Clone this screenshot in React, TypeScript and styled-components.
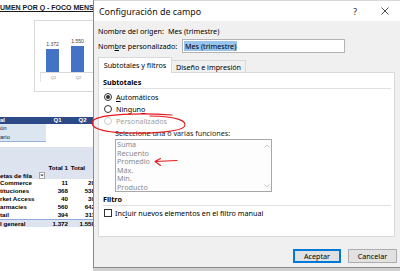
import React from 'react';
import styled, { createGlobalStyle } from 'styled-components';

const GlobalStyle = createGlobalStyle`
  html, body { margin: 0; padding: 0; background: #ffffff; }
  body { width: 400px; height: 271px; overflow: hidden; }
`;

const Screen = styled.div`
  position: relative;
  width: 400px;
  height: 271px;
  display: flex;
  overflow: hidden;
  background: #ffffff;
`;

/* ---------- spreadsheet (left) ---------- */
const Sheet = styled.div`
  width: 93px;
  flex: none;
  display: flex;
  flex-direction: column;
  overflow: hidden;
  font-family: "Liberation Sans", Arial, sans-serif;
  color: #000;
`;

const SheetTitle = styled.div`
  height: 16px;
  line-height: 16px;
  white-space: nowrap;
  font-size: 7px;
  font-weight: bold;
  text-decoration: underline;
  color: #1a1a1a;
`;

const ChartBox = styled.div`
  margin: 4px 0 0 34px;
  width: 70px;
  height: 72px;
  flex: none;
  box-sizing: border-box;
  border: 1px solid #d9d9d9;
  display: flex;
  flex-direction: column;
`;

const Plot = styled.div`
  height: 51px;
  padding-left: 5px;
  display: flex;
  align-items: flex-end;
`;

const BarCol = styled.div`
  width: 25px;
  display: flex;
  flex-direction: column;
  align-items: center;
  justify-content: flex-end;
`;

const BarLabel = styled.div`
  font-size: 5px;
  color: #404040;
  margin-bottom: 2px;
`;

const Bar = styled.div<{ $h: number }>`
  width: 13px;
  height: ${(p) => p.$h}px;
  background: #4472c4;
`;

const Axis = styled.div`
  margin-left: 5px;
  height: 10px;
  border-top: 1px solid #d9d9d9;
  border-left: 1px solid #e3e3e3;
  box-sizing: border-box;
  display: flex;
`;

const AxisLabel = styled.div`
  width: 25px;
  text-align: center;
  font-size: 4px;
  line-height: 9px;
  color: #808080;
`;

const PivotGrid = styled.div<{ $top: number }>`
  margin-top: ${(p) => p.$top}px;
  display: grid;
  grid-template-columns: 46px 23px 27px;
  white-space: nowrap;
`;

const HeadCell = styled.div<{ $align?: string }>`
  height: 7px;
  line-height: 7px;
  background: #2c4a86;
  color: #ffffff;
  font-size: 6px;
  font-weight: bold;
  text-align: ${(p) => p.$align || 'left'};
`;

const LightCell = styled.div<{ $last?: boolean }>`
  height: 9px;
  line-height: 9px;
  font-size: 6px;
  background: #dce6f1;
  color: #222;
  border-bottom: ${(p) => (p.$last ? '1px solid #95b3d7' : 'none')};
  box-sizing: border-box;
`;

const EmptyCell = styled.div``;

const Pivot2 = styled.div`
  margin-top: 5px;
  height: 80px;
  background: #dde3ef;
  padding-top: 17px;
  box-sizing: border-box;
  display: grid;
  grid-template-columns: 46px 23px 27px;
  grid-auto-rows: min-content;
  white-space: nowrap;
  font-weight: bold;
  font-size: 6.2px;
`;

const PCell = styled.div<{ $align?: string; $h?: number; $bg?: string; $top?: boolean }>`
  height: ${(p) => p.$h || 8}px;
  line-height: ${(p) => p.$h || 8}px;
  text-align: ${(p) => p.$align || 'left'};
  background: ${(p) => p.$bg || 'transparent'};
  border-top: ${(p) => (p.$top ? '1px solid #8ea9db' : 'none')};
  box-sizing: border-box;
  padding-right: 1px;
  overflow: hidden;
  display: flex;
  align-items: center;
  justify-content: ${(p) => (p.$align === 'right' ? 'flex-end' : 'flex-start')};
`;

const FilterBtn = styled.span`
  margin-left: auto;
  width: 6px;
  height: 7px;
  box-sizing: border-box;
  border: 1px solid #a6a6a6;
  background: #fff;
  display: flex;
  align-items: center;
  justify-content: center;
`;

/* ---------- dialog (right) ---------- */
const RightCol = styled.div`
  flex: 1;
  display: flex;
  flex-direction: column;
`;

const Dialog = styled.div`
  height: 268px;
  flex: none;
  box-sizing: border-box;
  border-left: 1px solid #8a8a8a;
  border-bottom: 1px solid #8a8a8a;
  display: flex;
  flex-direction: column;
  font-family: "Noto Sans", "Segoe UI", sans-serif;
  font-size: 7.2px;
  color: #000;
`;

const BottomStrip = styled.div`
  flex: 1;
  background: #d0d0d0;
`;

const TitleBar = styled.div`
  height: 21px;
  flex: none;
  background: #ffffff;
  border-top: 1px solid #d8d8d8;
  box-sizing: border-box;
  display: flex;
  align-items: center;
  padding-left: 5px;
`;

const TitleText = styled.div`
  flex: 1;
  font-size: 8.9px;
  color: #111;
`;

const TitleBtn = styled.div<{ $w: number }>`
  width: ${(p) => p.$w}px;
  display: flex;
  justify-content: center;
  align-items: center;
  font-size: 8.5px;
  color: #222;
`;

const Body = styled.div`
  flex: 1;
  background: #f0f0f0;
  padding: 0 3px 0 4px;
  display: flex;
  flex-direction: column;
`;

const FieldRow = styled.div<{ $mt: number }>`
  margin-top: ${(p) => p.$mt}px;
  height: 14px;
  display: flex;
  align-items: center;
  white-space: nowrap;
`;

const FieldLabel = styled.div<{ $w: number }>`
  width: ${(p) => p.$w}px;
  flex: none;
`;

const TextInput = styled.div`
  width: 163px;
  height: 14px;
  box-sizing: border-box;
  border: 1px solid #b4b4b4;
  background: #ffffff;
  display: flex;
  align-items: center;
  padding-left: 1px;
`;

const Selected = styled.span`
  background: #99c4ec;
  color: #000;
  padding: 0 1px;
  line-height: 10px;
`;

const TabStrip = styled.div`
  margin-top: 4px;
  height: 15px;
  flex: none;
  display: flex;
  align-items: flex-end;
`;

const Tab = styled.div<{ $active?: boolean }>`
  position: relative;
  z-index: ${(p) => (p.$active ? 1 : 0)};
  width: 74px;
  height: ${(p) => (p.$active ? 16 : 12)}px;
  margin-bottom: ${(p) => (p.$active ? -1 : 0)}px;
  box-sizing: border-box;
  border: 1px solid #d9d9d9;
  border-bottom: none;
  border-left: ${(p) => (p.$active ? '1px solid #d9d9d9' : 'none')};
  background: ${(p) => (p.$active ? '#ffffff' : '#f0f0f0')};
  padding-bottom: ${(p) => (p.$active ? 1 : 0)}px;
  display: flex;
  align-items: center;
  justify-content: center;
  white-space: nowrap;
`;

const Panel = styled.div`
  width: 297px;
  height: 165px;
  flex: none;
  box-sizing: border-box;
  border: 1px solid #d9d9d9;
  background: #ffffff;
  padding: 0 3px 0 4px;
  display: flex;
  flex-direction: column;
`;

const GroupTitle = styled.div<{ $mt: number }>`
  margin-top: ${(p) => p.$mt}px;
  height: 10px;
  line-height: 10px;
  font-weight: bold;
`;

const Separator = styled.div<{ $mb?: number }>`
  margin-top: 1px;
  margin-bottom: ${(p) => p.$mb || 0}px;
  height: 1px;
  background: #e0e0e0;
`;

const OptionRow = styled.div<{ $disabled?: boolean }>`
  height: 12px;
  display: flex;
  align-items: center;
  gap: 4px;
  color: ${(p) => (p.$disabled ? '#a0a0a0' : '#000')};
`;

const Radio = styled.span<{ $checked?: boolean; $disabled?: boolean }>`
  margin-left: 1px;
  width: 8px;
  height: 8px;
  box-sizing: border-box;
  border-radius: 50%;
  border: 1px solid ${(p) => (p.$disabled ? '#cccccc' : '#333333')};
  background: #fff;
  display: flex;
  align-items: center;
  justify-content: center;
  &::after {
    content: '';
    display: ${(p) => (p.$checked ? 'block' : 'none')};
    width: 4px;
    height: 4px;
    border-radius: 50%;
    background: #333;
  }
`;

const Caption = styled.div`
  height: 12px;
  line-height: 12px;
  padding-left: 12px;
  color: #222;
`;

const ListBox = styled.div`
  margin-left: 12px;
  width: 157px;
  height: 53px;
  flex: none;
  box-sizing: border-box;
  border: 1px solid #a8a8a8;
  background: #fdfdfd;
  display: flex;
`;

const ListItems = styled.div`
  flex: 1;
  padding: 0 0 0 1px;
  display: flex;
  flex-direction: column;
`;

const ListItem = styled.div`
  height: 8.6px;
  line-height: 8.6px;
  color: #8a8a8a;
`;

const ScrollTrack = styled.div`
  width: 9px;
  display: flex;
  flex-direction: column;
  justify-content: space-between;
  align-items: center;
  padding: 4px 0 3px;
  box-sizing: border-box;
`;

const CheckRow = styled.div`
  margin-top: 2px;
  height: 10px;
  display: flex;
  align-items: center;
  gap: 3px;
`;

const CheckBox = styled.span`
  margin-left: 1px;
  width: 8px;
  height: 8px;
  box-sizing: border-box;
  border: 1px solid #333;
  background: #fff;
`;

const ButtonRow = styled.div`
  margin-top: 12px;
  display: flex;
  justify-content: flex-end;
  gap: 7px;
`;

const Button = styled.div<{ $primary?: boolean; $w: number }>`
  width: ${(p) => p.$w}px;
  height: 14px;
  box-sizing: border-box;
  border: 1px solid ${(p) => (p.$primary ? '#0078d7' : '#adadad')};
  box-shadow: ${(p) => (p.$primary ? 'inset 0 0 0 1px #0078d7' : 'none')};
  background: #e1e1e1;
  display: flex;
  align-items: center;
  justify-content: center;
`;

const Overlay = styled.svg`
  position: absolute;
  left: 0;
  top: 0;
  pointer-events: none;
`;

const Arrow = ({ up }: { up?: boolean }) => (
  <svg width="6" height="4" viewBox="0 0 6 4">
    <path d={up ? 'M0.5 3.5 L3 1 L5.5 3.5' : 'M0.5 0.5 L3 3 L5.5 0.5'} fill="none" stroke="#b8b8b8" strokeWidth="0.8" />
  </svg>
);

const rows = [
  ['Commerce', '11', '20'],
  ['tituciones', '368', '538'],
  ['rket Access', '40', '39'],
  ['armacies', '560', '642'],
  ['tail', '394', '311'],
];

export default function App() {
  return (
    <>
      <GlobalStyle />
      <Screen>
        <Sheet>
          <SheetTitle>UMEN POR Q - FOCO MENS</SheetTitle>
          <ChartBox>
            <Plot>
              <BarCol>
                <BarLabel>1.372</BarLabel>
                <Bar $h={23} />
              </BarCol>
              <BarCol>
                <BarLabel>1.550</BarLabel>
                <Bar $h={26} />
              </BarCol>
            </Plot>
            <Axis>
              <AxisLabel>Q1</AxisLabel>
              <AxisLabel>Q2</AxisLabel>
            </Axis>
          </ChartBox>
          <PivotGrid $top={25}>
            <HeadCell>al</HeadCell>
            <HeadCell $align="center">Q1</HeadCell>
            <HeadCell $align="center">Q2</HeadCell>
            <LightCell>ón</LightCell>
            <EmptyCell />
            <EmptyCell />
            <LightCell $last>ario</LightCell>
            <EmptyCell />
            <EmptyCell />
          </PivotGrid>
          <Pivot2>
            <PCell />
            <PCell $align="right">Total 1</PCell>
            <PCell>&nbsp;Total</PCell>
            <PCell $h={7}>
              etas de fila
              <FilterBtn>
                <svg width="4" height="3" viewBox="0 0 4 3">
                  <path d="M0 0.5 H4 L2 2.5 Z" fill="#555" />
                </svg>
              </FilterBtn>
            </PCell>
            <PCell $h={7} />
            <PCell $h={7} />
            {rows.map((r) => (
              <React.Fragment key={r[0]}>
                <PCell $bg="#ffffff">{r[0]}</PCell>
                <PCell $bg="#ffffff" $align="right">{r[1]}</PCell>
                <PCell $bg="#ffffff" $align="right">{r[2]}</PCell>
              </React.Fragment>
            ))}
            <PCell $top>l general</PCell>
            <PCell $top $align="right">1.372</PCell>
            <PCell $top $align="right">1.550</PCell>
          </Pivot2>
        </Sheet>

        <RightCol>
          <Dialog>
            <TitleBar>
              <TitleText>Configuración de campo</TitleText>
              <TitleBtn $w={30}>?</TitleBtn>
              <TitleBtn $w={30}>
                <svg width="8" height="8" viewBox="0 0 8 8">
                  <path d="M0.5 0.5 L7.5 7.5 M7.5 0.5 L0.5 7.5" stroke="#222" strokeWidth="0.8" />
                </svg>
              </TitleBtn>
            </TitleBar>
            <Body>
              <FieldRow $mt={3}>
                <FieldLabel $w={70}>Nombre del origen:</FieldLabel>
                <span>Mes (trimestre)</span>
              </FieldRow>
              <FieldRow $mt={1}>
                <FieldLabel $w={84}>
                  Nom<u>b</u>re personalizado:
                </FieldLabel>
                <TextInput>
                  <Selected>Mes (trimestre)</Selected>
                </TextInput>
              </FieldRow>
              <TabStrip>
                <Tab $active>Subtotales y filtros</Tab>
                <Tab>Diseño e impresión</Tab>
              </TabStrip>
              <Panel>
                <GroupTitle $mt={4}>Subtotales</GroupTitle>
                <Separator $mb={2} />
                <OptionRow>
                  <Radio $checked />
                  <span>
                    <u>A</u>utomáticos
                  </span>
                </OptionRow>
                <OptionRow>
                  <Radio />
                  <span>
                    Ningun<u>o</u>
                  </span>
                </OptionRow>
                <OptionRow $disabled>
                  <Radio $disabled />
                  <span>Personalizados</span>
                </OptionRow>
                <Caption>Seleccione una o varias funciones:</Caption>
                <ListBox>
                  <ListItems>
                    <ListItem>Suma</ListItem>
                    <ListItem>Recuento</ListItem>
                    <ListItem>Promedio</ListItem>
                    <ListItem>Máx.</ListItem>
                    <ListItem>Mín.</ListItem>
                    <ListItem>Producto</ListItem>
                  </ListItems>
                  <ScrollTrack>
                    <Arrow up />
                    <Arrow />
                  </ScrollTrack>
                </ListBox>
                <GroupTitle $mt={2}>Filtro</GroupTitle>
                <Separator />
                <CheckRow>
                  <CheckBox />
                  <span>
                    Inc<u>l</u>uir nuevos elementos en el filtro manual
                  </span>
                </CheckRow>
              </Panel>
              <ButtonRow>
                <Button $primary $w={48}>Aceptar</Button>
                <Button $w={49}>Cancelar</Button>
              </ButtonRow>
            </Body>
          </Dialog>
          <BottomStrip />
        </RightCol>

        <Overlay width="400" height="271" viewBox="0 0 400 271">
          <path
            d="M172 115 C140 112.5 100 114 93 120.5 C88.5 127 100 132.5 128 133 C155 133.5 181 131.5 184.5 126.5 C187.5 121 178 116.5 150 116"
            fill="none"
            stroke="#e5191d"
            strokeWidth="1.2"
            strokeLinecap="round"
          />
          <path
            d="M155 161.5 L177 160.5 M155 161.5 L160.5 158.5 M155 161.5 L160.5 165.5"
            fill="none"
            stroke="#e5191d"
            strokeWidth="1.1"
            strokeLinecap="round"
          />
        </Overlay>
      </Screen>
    </>
  );
}
